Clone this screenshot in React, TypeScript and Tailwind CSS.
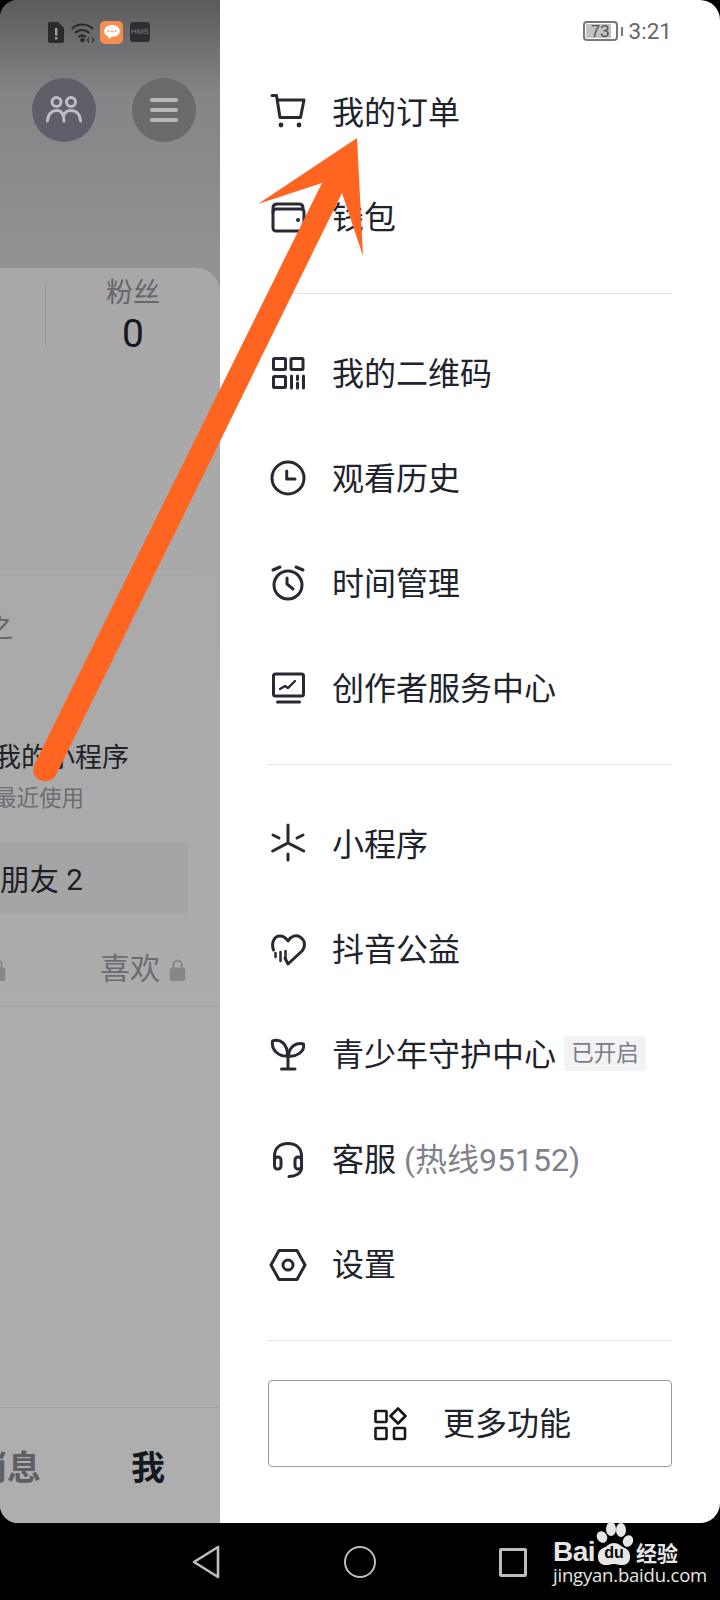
import React from "react";

const S = "#272a33";
const Ic = ({ children }: { children: React.ReactNode }) => (
  <svg viewBox="0 0 40 38" className="w-[40px] h-[38px] shrink-0 overflow-visible" fill="none" stroke={S} strokeWidth={3} strokeLinecap="round" strokeLinejoin="round">
    {children}
  </svg>
);

const Cart = () => (
  <Ic>
    <path d="M4 1.500H8.500L12 23.500H32.500L36 6H9.500" />
    <circle cx="13" cy="31" r="2.400" fill={S} stroke="none" />
    <circle cx="31" cy="31" r="2.400" fill={S} stroke="none" />
  </Ic>
);
const Wallet = () => (
  <Ic>
    <rect x="5" y="10" width="31" height="22" rx="3" />
    <path d="M5 13V9Q5 5 9 5H31Q35 5 35 9V10" />
    <circle cx="30" cy="21" r="2" fill={S} stroke="none" />
  </Ic>
);
const Qr = () => (
  <Ic>
    <rect x="5.500" y="3.500" width="12" height="11" rx="1" />
    <rect x="23" y="3.500" width="12" height="11" rx="1" />
    <rect x="5.500" y="21.500" width="12" height="11" rx="1" />
    <path d="M23.500 21V33M29.500 21V24.500M29.500 28V33M35.500 21V33" />
  </Ic>
);
const Clock = () => (
  <Ic>
    <circle cx="20" cy="18" r="16" />
    <path d="M18.700 11V19H27" />
  </Ic>
);
const Alarm = () => (
  <Ic>
    <circle cx="20" cy="20" r="14" />
    <path d="M5 5L12 2M35 5L28 2M19 13V19L25 24" />
  </Ic>
);
const Monitor = () => (
  <Ic>
    <rect x="5.500" y="4" width="30" height="22" rx="2" />
    <path d="M9.500 32H31.500" />
    <path d="M12 19L17 16L20 18L27 11" strokeWidth={2.400} />
  </Ic>
);
const Mini = () => (
  <Ic>
    <path d="M20 -1V15.500M4.700 25L18.700 17.700M35.700 25L21.300 17.700M20 28V34M5 9L11 12M35 9L29 12" />
  </Ic>
);
const Heart = () => (
  <Ic>
    <path d="M5.500 19C3 12 6 5 12 5C16 5 18 7 20 10C23 5 28 3.500 32 6C37 9 38 15 34 20L20 33L17 27" />
    <path d="M7.500 22V26M12.500 21V30M17.500 20V28" strokeWidth={2.500} />
  </Ic>
);
const Sprout = () => (
  <Ic>
    <path d="M20 20V32.500M13.500 33H27" />
    <path d="M4.500 5C12 2 20 8 19.500 20C11 21 3 14 4.500 5Z" />
    <path d="M35.500 8C29 6 21 10 20.500 20C28 21 37 16 35.500 8Z" />
  </Ic>
);
const Headset = () => (
  <Ic>
    <path d="M6.500 22V15C6.500 7 12 2.500 20 2.500C28 2.500 33.500 7 33.500 15V27C33.500 32 28 35.500 21 35.500" />
    <rect x="6.500" y="16" width="6.500" height="12" rx="3" />
    <rect x="27" y="16" width="6.500" height="12" rx="3" />
  </Ic>
);
const Gear = () => (
  <Ic>
    <path d="M3 19L11 4.500H29L37 19L29 33.500H11Z" />
    <circle cx="20" cy="19" r="5" />
  </Ic>
);

const Row = ({ icon, children }: { icon: React.ReactNode; children: React.ReactNode }) => (
  <div className="h-[105px] flex items-center gap-[24px]">
    {icon}
    <div className="flex items-center text-[32px] leading-[44px] text-[#20232c] whitespace-nowrap">{children}</div>
  </div>
);

const Divider = () => <div className="h-px bg-[#e3e3e5] mt-[23px] mb-[27px]" />;

const Lock = () => (
  <svg viewBox="0 0 16 22" className="w-[17px] h-[23px] shrink-0" fill="none">
    <path d="M4 10V6.500a4 4 0 0 1 8 0V10" stroke="#87878b" strokeWidth="2" />
    <rect x="0.500" y="9" width="15" height="13" rx="2.500" fill="#87878b" />
  </svg>
);

function StatusLeft() {
  return (
    <div className="flex items-center pl-[48px] pt-[20px] h-[44px]">
      <svg viewBox="0 0 16 21" className="w-[16px] h-[21px] shrink-0">
        <path d="M2 0H10L16 6V19a2 2 0 0 1-2 2H2a2 2 0 0 1-2-2V2a2 2 0 0 1 2-2Z" fill="#2b2b2d" />
        <rect x="7" y="6" width="2.400" height="7.500" fill="#a0a0a0" />
        <rect x="7" y="15" width="2.400" height="2.400" fill="#a0a0a0" />
      </svg>
      <svg viewBox="0 0 25 21" className="w-[25px] h-[21px] ml-[7px] shrink-0" fill="none" stroke="#2b2b2d" strokeWidth="2.200">
        <path d="M0.800 7C6 1 16 1 22 7M4 11C8 7 14 7 18.500 11M7.500 15C10 13 12.500 13 15 15" />
        <circle cx="11.500" cy="18" r="2.300" fill="#2b2b2d" stroke="none" />
        <path d="M18 15.500L16.500 18L18 20.500M21 15.500L22.500 18L21 20.500" strokeWidth="1.300" />
      </svg>
      <div className="w-[23px] h-[23px] ml-[4px] rounded-[5px] bg-[#f58f4f] flex items-center justify-center shrink-0">
        <svg viewBox="0 0 18 16" className="w-[16px] h-[14px]">
          <path d="M9 0C14 0 18 3 18 7C18 11 14 13.500 9 13.500L5 16V13C2 12 0 10 0 7C0 3 4 0 9 0Z" fill="#fff" />
          <circle cx="5" cy="7" r="1" fill="#f58f4f" />
          <circle cx="9" cy="7" r="1" fill="#f58f4f" />
          <circle cx="13" cy="7" r="1" fill="#f58f4f" />
        </svg>
      </div>
      <div className="w-[20px] h-[20px] ml-[7px] rounded-[3px] bg-[#2e2e30] flex items-center justify-center text-[8px] leading-none text-[#808080] font-['Liberation_Sans',sans-serif] shrink-0">
        HMS
      </div>
    </div>
  );
}

function LeftPanel() {
  return (
    <div className="w-[220px] shrink-0 rounded-l-[18px] overflow-hidden bg-[#929293] flex flex-col">
      <div className="h-[268px] shrink-0 bg-linear-to-b from-[#5b5b5e] via-[#858587] via-35% to-[#929293]">
        <StatusLeft />
        <div className="flex mt-[34px] pl-[32px] gap-[36px]">
          <div className="w-[64px] h-[64px] rounded-full bg-[#5f5f69] flex items-center justify-center">
            <svg viewBox="0 0 36 28" className="w-[36px] h-[28px]" fill="none" stroke="#bfbfc1" strokeWidth="3" strokeLinecap="round">
              <circle cx="10.500" cy="6" r="4.500" />
              <circle cx="25" cy="6" r="4.500" />
              <path d="M1.500 25C2 18 6 14.500 11 14.500C15 14.500 18 18 18 25M18 19C19 16 22 14.500 25 14.500C30 14.500 34 18 34.500 25" />
            </svg>
          </div>
          <div className="w-[64px] h-[64px] rounded-full bg-[#6a6a6c] flex flex-col items-center justify-center gap-[6px]">
            <div className="w-[28px] h-[4px] rounded-full bg-[#b7b7b8]" />
            <div className="w-[28px] h-[4px] rounded-full bg-[#b7b7b8]" />
            <div className="w-[28px] h-[4px] rounded-full bg-[#b7b7b8]" />
          </div>
        </div>
      </div>

      <div className="flex-1 flex flex-col bg-linear-to-b from-[#a8a8a8] to-[#aeaeae] rounded-tr-[24px]">
        <div className="h-[308px] shrink-0 flex items-start w-[190px] border-b border-[#a4a4a4]">
          <div className="w-px h-[64px] mt-[15px] ml-[45px] bg-[#989898]" />
          <div className="w-[88px] ml-[43px] pt-[7px] flex flex-col items-center whitespace-nowrap">
            <div className="text-[27px] leading-[36px] text-[#66666c]">粉丝</div>
            <div className="text-[39px] leading-[44px] mt-px text-[#16181f]">0</div>
          </div>
        </div>

        <div className="text-[28px] leading-[36px] text-[#66666c] mt-[35px] ml-[-15px] whitespace-nowrap">之</div>
        <div className="text-[27px] leading-[34px] text-[#202128] mt-[94px] ml-[-6px] whitespace-nowrap">我的小程序</div>
        <div className="text-[22.500px] leading-[30px] text-[#6d6d72] mt-[8px] ml-[-6px] whitespace-nowrap">最近使用</div>
        <div className="w-[188px] h-[71px] mt-[30px] bg-[#a5a5a5] rounded-r-[4px] flex items-center text-[29.500px] pt-[3px] text-[#1d1f26] whitespace-nowrap">
          朋友 2
        </div>
        <div className="w-[186px] h-[40px] mt-[35px] flex items-center justify-between">
          <div className="ml-[-11px]">
            <Lock />
          </div>
          <div className="flex items-center gap-[9px] text-[30px] leading-[40px] text-[#6c6c71] whitespace-nowrap">
            喜欢
            <Lock />
          </div>
        </div>
        <div className="h-px bg-[#a0a0a0] mt-[17px]" />
        <div className="flex-1" />
        <div className="h-px bg-[#a0a0a0]" />
        <div className="h-[115px] flex items-center font-bold text-[34px] leading-[44px] whitespace-nowrap pt-[4px]">
          <span className="text-[#5e5e64] ml-[-27px]">消息</span>
          <span className="text-[#16181f] ml-[90px]">我</span>
        </div>
      </div>
    </div>
  );
}

function RightPanel() {
  return (
    <div className="flex-1 bg-white rounded-r-[20px] px-[48px] flex flex-col">
      <div className="h-[60px] pt-[2px] flex items-center justify-end shrink-0">
        <div className="w-[35px] h-[20px] border-2 border-[#777] rounded-[4px] relative flex items-center justify-center p-px">
          <div className="absolute left-px top-px bottom-px w-[25px] bg-[#c2c2c2] rounded-[1px]" />
          <span className="relative text-[17px] leading-none text-[#555] font-['Liberation_Sans',sans-serif]">73</span>
        </div>
        <div className="w-[2px] h-[9px] bg-[#777] ml-[3px]" />
        <span className="ml-[6px] text-[22.500px] leading-none text-[#666]">3:21</span>
      </div>

      <Row icon={<Cart />}>我的订单</Row>
      <Row icon={<Wallet />}>钱包</Row>
      <Divider />
      <Row icon={<Qr />}>我的二维码</Row>
      <Row icon={<Clock />}>观看历史</Row>
      <Row icon={<Alarm />}>时间管理</Row>
      <Row icon={<Monitor />}>创作者服务中心</Row>
      <Divider />
      <Row icon={<Mini />}>小程序</Row>
      <Row icon={<Heart />}>抖音公益</Row>
      <Row icon={<Sprout />}>
        青少年守护中心
        <span className="ml-[8px] mb-[3px] w-[82px] h-[35px] bg-[#f2f2f4] rounded-[4px] flex items-center justify-center text-[22.500px] text-[#7b7d85]">已开启</span>
      </Row>
      <Row icon={<Headset />}>
        客服<span className="text-[#7f828a] ml-[8px]">(热线95152)</span>
      </Row>
      <Row icon={<Gear />}>设置</Row>
      <div className="h-px bg-[#e3e3e5] mt-[23px]" />

      <div className="mt-[39px] h-[87px] border border-[#999] rounded-[4px] flex items-center justify-center gap-[35px] pl-[5px]">
        <svg viewBox="0 0 34 34" className="w-[34px] h-[34px] shrink-0" fill="none" stroke="#15171c" strokeWidth="2.600" strokeLinejoin="round">
          <rect x="1.500" y="4" width="11" height="11" rx="1" />
          <path d="M24 1.500L31.500 9L24 16.500L16.500 9Z" />
          <rect x="1.500" y="21" width="11" height="11" rx="1" />
          <rect x="20" y="21" width="11" height="11" rx="1" />
        </svg>
        <span className="text-[32px] leading-[44px] text-[#20232c]">更多功能</span>
      </div>
    </div>
  );
}

function NavBar() {
  return (
    <div className="relative flex-1 flex items-center">
      <svg viewBox="0 0 28 34" className="w-[28px] h-[34px] ml-[192px] mt-[1px] shrink-0" fill="none" stroke="#bdbdbd" strokeWidth="2.600" strokeLinejoin="round">
        <path d="M2 17L26 2V32Z" />
      </svg>
      <div className="w-[32px] h-[32px] ml-[124px] mt-[1px] rounded-full border-[2.500px] border-[#bdbdbd] shrink-0" />
      <div className="w-[28px] h-[29px] ml-[123px] mt-[1px] rounded-[2px] border-[3px] border-[#bdbdbd] shrink-0" />

      <div className="absolute left-[553px] top-[-2px] w-[135px] h-[68px] text-[#e6e6e6]">
        <div className="flex items-end h-[44px]">
          <span className="w-[41px] font-['Liberation_Sans',sans-serif] font-bold text-[28px] leading-[26px] tracking-[-0.5px]">Bai</span>
          <div className="relative w-[38px] h-[44px] shrink-0 ml-[1px]">
            <svg viewBox="0 0 38 44" className="absolute inset-0 w-full h-full" fill="#e6e6e6">
              <ellipse cx="7" cy="16" rx="5" ry="6" transform="rotate(-30 7 16)" />
              <ellipse cx="16" cy="8" rx="5" ry="7" />
              <ellipse cx="26" cy="9" rx="5" ry="7" />
              <ellipse cx="33" cy="20" rx="5" ry="6" transform="rotate(25 33 20)" />
              <path d="M19 22C24 22 25 25 30 27C37 30 37 43 29 44C25 44.500 22 43 19 43C16 43 13 44.500 9 44C1 43 1 30 8 27C13 25 14 22 19 22Z" />
            </svg>
            <span className="absolute left-0 right-0 top-[23px] text-center text-[16px] leading-[18px] font-bold text-black font-['Liberation_Sans',sans-serif]">du</span>
          </div>
          <span className="text-[21px] leading-[22px] font-bold ml-[3px] whitespace-nowrap">经验</span>
        </div>
        <div className="text-[18.500px] leading-[20px] mt-0 font-['Open_Sans',sans-serif] whitespace-nowrap tracking-[-0.2px]">jingyan.baidu.com</div>
      </div>
    </div>
  );
}

export default function App() {
  return (
    <div className="relative w-[720px] h-[1600px] bg-black overflow-hidden flex flex-col font-[Roboto,'Noto_Sans_CJK_SC',sans-serif]">
      <div className="h-[1523px] flex shrink-0">
        <LeftPanel />
        <RightPanel />
      </div>
      <NavBar />
      <svg viewBox="0 0 720 1600" className="absolute inset-0 w-[720px] h-[1600px] pointer-events-none">
        <path d="M357 138L258 204L322 183L35 763Q30 775 40 780Q50 784 56 775L342 193L363 256Z" fill="#ff6420" />
      </svg>
    </div>
  );
}
